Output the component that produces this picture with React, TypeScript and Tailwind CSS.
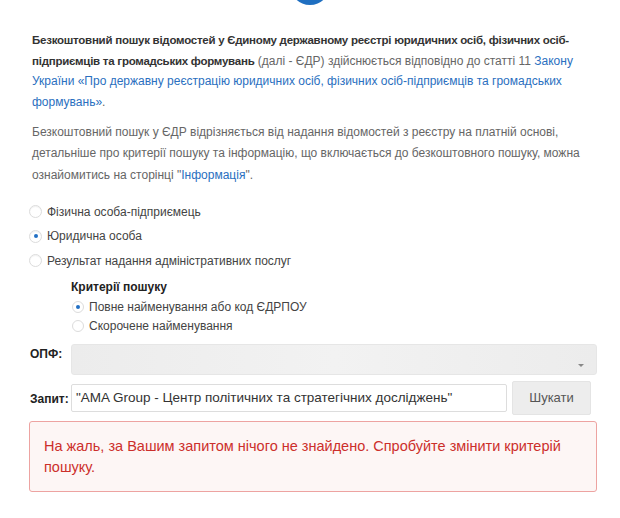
import React from "react";

type RadioProps = {
  label: string;
  checked?: boolean;
};

function Radio({ label, checked = false }: RadioProps) {
  return (
    <label className="flex h-[24.5px] items-center gap-[5px]">
      <span className="flex h-[13px] w-[13px] shrink-0 items-center justify-center rounded-full border border-[#dcdcdc] bg-white shadow-[inset_0_1px_1px_rgba(0,0,0,0.06)]">
        {checked ? <span className="h-[4px] w-[4px] rounded-full bg-[#2270c4]" /> : null}
      </span>
      <span className="text-[12px] text-[#444]">{label}</span>
    </label>
  );
}

function SubRadio({ label, checked = false }: RadioProps) {
  return (
    <label className="flex h-[19px] items-center gap-[5px]">
      <span className="flex h-[12px] w-[12px] shrink-0 items-center justify-center rounded-full border border-[#dcdcdc] bg-white">
        {checked ? <span className="h-[4px] w-[4px] rounded-full bg-[#2270c4]" /> : null}
      </span>
      <span className="text-[12px] text-[#444]">{label}</span>
    </label>
  );
}

export default function App() {
  return (
    <div
      className="relative h-[518px] w-[620px] overflow-hidden bg-white"
      style={{ fontFamily: '"Liberation Sans", Arial, sans-serif' }}
    >
      <div className="flex justify-center">
        <div className="-mt-[35px] h-[40px] w-[40px] rounded-full bg-[#1f6fc1]" />
      </div>

      <div className="w-[597px] pl-[29px] pt-[25px]">
        <p className="pl-[3px] text-[12px] leading-[20.7px] text-[#666]">
          <b className="text-[11.5px] font-bold tracking-[-0.25px] text-[#333]">
            <span className="whitespace-nowrap">
              Безкоштовний пошук відомостей у Єдиному державному реєстрі юридичних осіб, фізичних осіб-
            </span>
            <br />
            підприємців та громадських формувань
          </b>{" "}
          (далі - ЄДР) здійснюється відповідно до статті 11{" "}
          <a className="text-[#2a6fc0]">
            Закону
            <br />
            України «Про державну реєстрацію юридичних осіб, фізичних осіб-підприємців та громадських
            <br />
            формувань»
          </a>
          .
        </p>

        <p className="mt-[9px] pl-[3px] text-[12px] leading-[21.5px] text-[#666]">
          Безкоштовний пошук у ЄДР відрізняється від надання відомостей з реєстру на платній основі,
          <br />
          детальніше про критерії пошуку та інформацію, що включається до безкоштовного пошуку, можна
          <br />
          ознайомитись на сторінці "<a className="text-[#2a6fc0]">Інформація</a>".
        </p>

        <div className="mt-[13px] flex flex-col">
          <Radio label="Фізична особа-підприємець" />
          <Radio label="Юридична особа" checked />
          <Radio label="Результат надання адміністративних послуг" />
        </div>

        <div className="mt-[6px] flex flex-col pl-[42px]">
          <div className="text-[12px] font-bold leading-[16px] text-[#222]">Критерії пошуку</div>
          <div className="mt-[3px] flex flex-col pl-[1px]">
            <SubRadio label="Повне найменування або код ЄДРПОУ" checked />
            <SubRadio label="Скорочене найменування" />
          </div>
        </div>

        <div className="mt-[8px] flex items-start">
          <span className="w-[42px] shrink-0 pl-[1px] pt-[1px] text-[12px] font-bold text-[#222]">
            ОПФ:
          </span>
          <div className="relative h-[31px] flex-1 rounded-[3px] border border-[#e6e6e6] bg-gradient-to-r from-[#ececec] via-[#f2f2f2] to-[#ececec]">
            <span className="absolute right-[12px] top-[19px] h-0 w-0 border-x-[3px] border-t-[3px] border-x-transparent border-t-[#888]" />
          </div>
        </div>

        <div className="mt-[6px] flex items-start">
          <span className="w-[42px] shrink-0 pl-[1px] pt-[9px] text-[12px] font-bold text-[#222]">
            Запит:
          </span>
          <div className="mt-[3px] flex h-[28px] w-[436px] items-center whitespace-nowrap rounded-[2px] border border-[#ddd] bg-white px-[4px] text-[13.5px] text-[#333]">
            "AMA Group - Центр політичних та стратегічних досліджень"
          </div>
          <button className="ml-[5px] flex h-[34px] w-[79px] items-center justify-center rounded-[2px] border border-[#e4e4e4] bg-[#ededed] text-[13px] text-[#555]">
            Шукати
          </button>
        </div>

        <div className="mt-[6px] rounded-[3px] border border-[#eda3a1] bg-[#fdf6f5] px-[14px] pb-[13px] pt-[14px] text-[14.5px] leading-[21px] text-[#cc2f2b]">
          На жаль, за Вашим запитом нічого не знайдено. Спробуйте змінити критерій
          <br />
          пошуку.
        </div>
      </div>
    </div>
  );
}
